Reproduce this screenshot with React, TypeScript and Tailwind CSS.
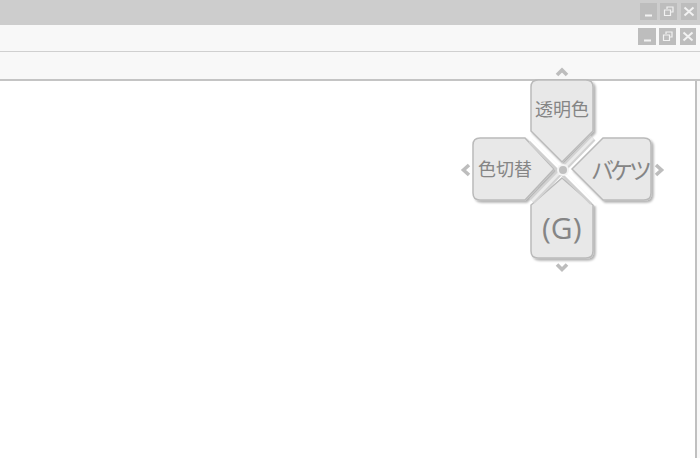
const BTN = "flex h-[17px] items-center justify-center bg-[#bdbdbd]";

function WinButtons({ firstWidth }: { firstWidth: string }) {
  return (
    <div className="flex">
      <div className={`${BTN} ${firstWidth} mr-[3px]`}>
        <svg width="17" height="17" viewBox="0 0 17 17">
          <path d="M5 12.5h7" stroke="#f2f2f2" strokeWidth="2" />
        </svg>
      </div>
      <div className={`${BTN} mr-[4px] w-[17px]`}>
        <svg width="17" height="17" viewBox="0 0 17 17" fill="none" stroke="#f2f2f2" strokeWidth="1.2">
          <path d="M7 6V4h6v5h-2" />
          <path d="M4.5 7h6v5.5h-6z" />
        </svg>
      </div>
      <div className={`${BTN} w-[16px]`}>
        <svg width="16" height="17" viewBox="0 0 16 17" fill="none" stroke="#f2f2f2" strokeWidth="2">
          <path d="M3.5 4.5l9 8M12.5 4.5l-9 8" />
        </svg>
      </div>
    </div>
  );
}

const PETALS = [
  "M538 80H586Q593 80 593 87V131L562 162L531 131V87Q531 80 538 80Z",
  "M480 138H525L554 169L525 200H480Q473 200 473 193V145Q473 138 480 138Z",
  "M603 138H644Q651 138 651 145V193Q651 200 644 200H603L572 169Z",
  "M562 178L593 205V251Q593 258 586 258H538Q531 258 531 251V205Z",
];

const CHEVRONS = [
  "M557 75L562 70L567 75",
  "M469 165L463.5 170L469 175",
  "M656 165L661.5 170L656 175",
  "M557 264.5L562 269.5L567 264.5",
];

function DPad() {
  // viewBox uses page coordinates so the shapes read straight off the screenshot
  return (
    <div className="absolute left-[455px] top-[62px] h-[212px] w-[214px] font-['Noto_Sans_CJK_JP',sans-serif] text-[#858585]">
      <svg width="214" height="212" viewBox="455 62 214 212" fill="none">
        <defs>
          <filter id="petalShadow" x="-20%" y="-20%" width="140%" height="140%">
            <feDropShadow dx="2" dy="2" stdDeviation="1.3" floodColor="#000" floodOpacity="0.3" />
          </filter>
        </defs>
        {PETALS.map((d) => (
          <path key={d} d={d} fill="#e8e8e8" stroke="#bababa" strokeWidth="1.5" filter="url(#petalShadow)" />
        ))}
        <path d="M593 138L532 201" stroke="#d2d2d2" strokeWidth="7" />
        <path d="M593 138L532 201" stroke="#ebebeb" strokeWidth="3" />
        <path d="M530 141L592 203" stroke="#cfcfcf" strokeWidth="5" />
        <path d="M526 135L596 205" stroke="#ffffff" strokeWidth="2.5" />
        <circle cx="563" cy="170" r="6" fill="#f4f4f4" />
        <circle cx="563" cy="170" r="4" fill="#c0c0c0" />
        {CHEVRONS.map((d) => (
          <path key={d} d={d} stroke="#bdbdbd" strokeWidth="3.6" />
        ))}
      </svg>
      <span className="absolute left-[80px] top-[34px] text-[18px] leading-6">透明色</span>
      <span className="absolute left-[23px] top-[94px] text-[18px] leading-6">色切替</span>
      <span className="absolute left-[136px] top-[91px] text-[23px] leading-8 tracking-[-4px]">バケツ</span>
      <span className="absolute left-[87px] top-[146px] font-['Open_Sans',sans-serif] text-[30px] leading-10">(G)</span>
    </div>
  );
}

export default function App() {
  return (
    <div className="relative flex h-[458px] w-[700px] flex-col overflow-hidden bg-[#f8f8f8]">
      <div className="flex h-[25px] shrink-0 justify-end bg-[#cdcdcd] pr-[3px] pt-[3px]">
        <WinButtons firstWidth="w-[17px]" />
      </div>
      <div className="flex h-[27px] shrink-0 justify-end border-b border-[#d0d0d0] pr-[4px] pt-[3px]">
        <WinButtons firstWidth="w-[18px]" />
      </div>
      <div className="h-[29px] shrink-0 border-b-2 border-[#c4c4c4]" />
      <div className="min-h-0 flex-1 pr-[3px]">
        <div className="h-full border-r-2 border-[#c0c0c0] bg-white" />
      </div>
      <DPad />
    </div>
  );
}
